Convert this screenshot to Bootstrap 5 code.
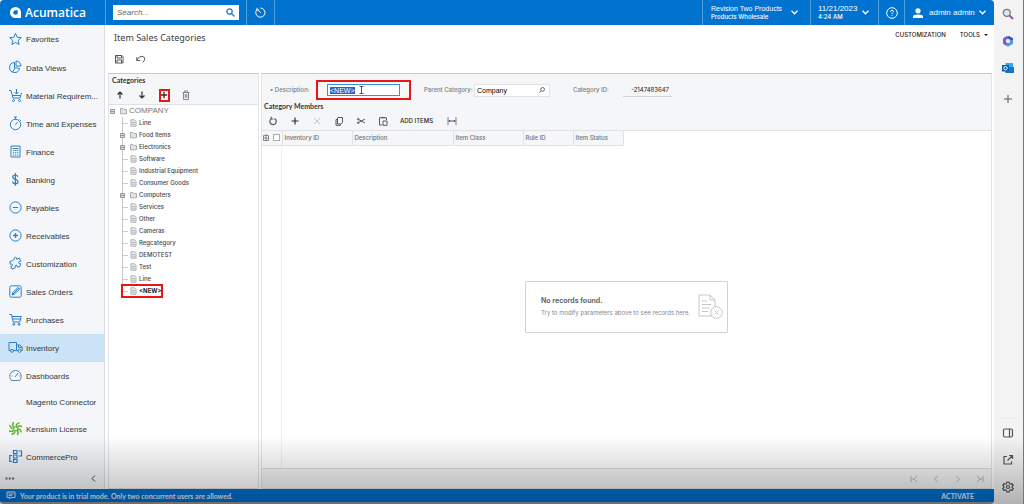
<!DOCTYPE html>
<html lang="en">
<head>
<meta charset="utf-8">
<meta name="viewport" content="width=device-width, initial-scale=1">
<title>Item Sales Categories</title>
<link href="https://cdn.jsdelivr.net/npm/bootstrap@5.3.0/dist/css/bootstrap.min.css" rel="stylesheet">
<script src="https://cdn.jsdelivr.net/npm/bootstrap@5.3.0/dist/js/bootstrap.bundle.min.js"></script>
<style>
:root{--blue:#0073d1;--pane:#f5f6f8;--line:#d3d5d8;--small:Inter,"Liberation Sans",sans-serif;--strong:Lato,"Liberation Sans",sans-serif}
body{font-family:"Liberation Sans",Arial,sans-serif;font-size:8px;line-height:12px;color:#3c4043;background:#f3f3f3}
svg{display:block;fill:none;flex:none}
svg:not([stroke]){stroke:currentColor}
button{border:0;background:none;padding:0;color:inherit;font:inherit;white-space:nowrap}
a{color:inherit;text-decoration:none}
.shell{height:100vh;border-right:1px solid #777}
.app{background:#fff;border-radius:4px;overflow:hidden}
.topbar{height:25px;background:var(--blue);color:#fff}
.topbar .cell{border-left:1px solid #4f9fdf;height:25px}
.brand{width:105px;padding-left:10px;font:600 12px/25px "Open Sans",sans-serif}
.search{width:126px;height:15px;margin-left:7px;background:#fff}
.search input{border:0;outline:0;padding:0 4px;font:italic 8px/15px "Liberation Sans",sans-serif;background:none;min-width:0}
.search input::placeholder{color:#666;opacity:1}
.two{line-height:8px;font-size:8px}
.two.firm{font-size:7px}
.two small{font:500 6px/8px var(--small);display:block}
.side{width:105px;background:#f4f6f9;border-right:1px solid #dcdee1;font-size:8px}
.side a{height:28px;padding:1px 0 0 8px;gap:3px;color:#33373b}
.side a:first-child{height:29px}
.side a.plain{height:25px}
.side a svg{width:15px;height:15px;color:#2a7fc9;margin-bottom:2px}
.side a.plain::before{content:"";width:15px}
.side a.on{background:#cbe3f7}
.side .more{height:18px;padding:0 8px 4px 5px}
.work{padding:0 2px 0 3px;min-width:0}
.title{font:400 9px/14px "Noto Sans",sans-serif;margin:0;padding:6px 0 0 6px}
.links{font:500 6px/12px var(--small);color:#222;padding:4px 4px 0 0;height:20px}
.links button{height:12px}
.links .dropdown-toggle::after{border-width:2px;border-top-color:#222;margin-left:4px}
.tool{width:22px;height:18px;display:flex;align-items:center;justify-content:center;color:#55595d}
.tool svg{width:10px;height:10px}
.tool.strong{color:#2b2f33}
.cats{width:151px}
.cats .box,.grid-pane{border:1px solid #e1e3e6;border-top-color:#c6c8cb}
.sm{font-family:var(--small);font-size:6px;line-height:12px}
.head{font:700 7px/12px var(--strong);margin:0;color:#33373b}
.bar{background:var(--pane)}
.tree{list-style:none;margin:0;padding:0;color:#44484c;font-weight:500}
.tree .node{height:12px;gap:2px}
.tree .root{font:8px/12px "Liberation Sans",sans-serif;color:#777}
.tree ul{list-style:none;margin:0 0 0 13px;padding:0}
.tree ul li{border-left:1px solid #c9c9c9}
.tree ul li:last-child{border-color:transparent}
.tree ul .node::before{content:"";width:5px;border-top:1px solid #ccc;flex:none}
.tree ul .fold::before{content:none}
.tree svg{width:7px;height:8px;color:#a9acb1}
.tree .pm{width:5px;height:5px;margin-left:-3px;margin-right:3px;color:#999}
.marked{outline:2px solid #e91616;outline-offset:-1px}
.newnode{width:40px}
.plus{width:11px;height:13px;display:flex;align-items:center;justify-content:center;outline-offset:-2px}
.plus svg{width:8px;height:8px}
.desc{width:95px;height:20px;padding:2px 9px;border:2px solid #e91616}
.desc input,.look input{border:1px solid #3d8fd6;height:12px;padding:0 2px;width:100%;font:7px/10px "Liberation Sans",sans-serif;outline:0;border-radius:0}
.desc input::selection{background:#2b62c8;color:#fff}
.caret{position:absolute;left:41px;top:4px}
.look{width:76px;background:#fff;border:1px solid #dfe1e4;height:13px}
.look input{border:0;min-width:0;height:11px;line-height:11px}
.idbox{width:49px;border-bottom:1px solid #d3d5d8;text-align:right;padding-right:3px;color:#222}
.lbl{color:#777b80;white-space:nowrap;font-weight:500}
.grid-table{table-layout:fixed;width:361px;margin:0}
.grid-table th{background:var(--pane);border-right:1px solid #dfe1e4;border-bottom:1px solid #dfe1e4;font-weight:500;color:#6c7075;height:14px;padding:0 2px;line-height:12px}
.grid-table input{width:7px;height:7px;margin:0;appearance:none;border:1px solid #a9acb0;background:#fff;display:block}
.selector{width:20px;border-right:1px solid #f0f1f2}
.empty{width:203px;height:52px;border:1px solid #d0d2d5;border-radius:1px;padding:0 4px 0 15px;color:#85898d;white-space:nowrap}
.empty strong{font:700 7px/12px var(--small);color:#666a6e}
.pager{height:20px;border-top:1px solid #dcdcdc;background:#f3f4f5}
.pager .tool{color:#b4b6b9}
.trial{height:15px;background:#0070d0;color:#e3effa;font:700 7px/12px var(--strong);padding:0 20px 0 6px}
.under{height:2px;background:#999}
.rail{width:29px;color:#555}
.rail button{height:27px;width:28px;display:flex;align-items:center;justify-content:center}
.rail svg{width:12px;height:12px}
.shade{position:absolute;left:0;right:0;bottom:0;height:68px;pointer-events:none;background:linear-gradient(transparent,rgba(0,0,0,.27))}
</style>
</head>
<body>
<div class="shell d-flex position-relative overflow-hidden">
<div class="app d-flex flex-column flex-grow-1">
  <header class="topbar d-flex align-items-center">
    <a href="#" class="brand d-flex align-items-center gap-1"><svg width="11" height="11" viewBox="0 0 11 11" stroke="none"><path fill="#fff" fill-rule="evenodd" d="M5.500 0A5.500 5.500 0 0 1 11 5.500V11H5.500A5.500 5.500 0 0 1 5.500 0ZM5.500 3.200A2.300 2.300 0 1 0 7.800 5.500V3.200Z"/></svg>Acumatica</a>
    <div class="cell d-flex align-items-center flex-grow-1">
      <div class="search d-flex align-items-center pe-1"><input class="flex-grow-1" type="text" placeholder="Search..." aria-label="Search"><svg width="9" height="9" viewBox="0 0 9 9" stroke="#2379c5" stroke-width="1.300"><circle cx="3.500" cy="3.500" r="2.700"/><path d="M5.400 5.400 8.500 8.500"/></svg></div>
      <button class="cell px-2 d-flex align-items-center" style="margin-left:7px" aria-label="Recent"><svg width="11" height="11" viewBox="0 0 11 11"><path d="M1.800 2.700A4.600 4.600 0 1 0 5.500 1M3.300 3.300 5.700 5.700M2 .8V3H4.200"/></svg></button>
      <div class="cell"></div>
    </div>
    <button class="cell d-flex align-items-center text-start" style="width:108px"><span class="two firm ps-2" style="width:88px">Revision Two Products<small>Products Wholesale</small></span><svg width="7" height="5" viewBox="0 0 7 5" stroke-width="1.300"><path d="M.5.8 3.500 3.800 6.500.8"/></svg></button>
    <button class="cell d-flex align-items-center text-start" style="width:68px"><span class="two" style="width:51px;padding-left:7px">11/21/2023<small>4:24 AM</small></span><svg width="7" height="5" viewBox="0 0 7 5" stroke-width="1.300"><path d="M.5.8 3.500 3.800 6.500.8"/></svg></button>
    <button class="cell d-flex align-items-center justify-content-center" style="width:26px" aria-label="Help"><svg width="12" height="12" viewBox="0 0 12 12"><circle cx="6" cy="6" r="5.300"/><path d="M4.500 4.800Q4.600 3.300 6 3.300 7.500 3.400 7.500 4.700 7.400 5.500 6.500 6 6 6.300 6 7.200M6 8.100V9.100"/></svg></button>
    <button class="cell d-flex align-items-center px-2" style="width:90px"><svg width="10" height="10" viewBox="0 0 10 10" stroke="none"><circle cx="5" cy="2.800" r="2.600" fill="#fff"/><path fill="#fff" d="M0 10V8.500Q0 6.500 5 6.500T10 8.500V10Z"/></svg><span class="flex-grow-1 text-start" style="padding-left:6px">admin admin</span><svg width="7" height="5" viewBox="0 0 7 5" stroke-width="1.300"><path d="M.5.8 3.500 3.800 6.500.8"/></svg></button>
  </header>

  <div class="d-flex flex-grow-1">
    <nav class="side d-flex flex-column">
      <a href="#" class="d-flex align-items-center"><svg viewBox="0 0 15 15"><path d="M7.500 1.500 9.200 5.300 13.300 5.700 10.200 8.400 11.100 12.500 7.500 10.400 3.900 12.500 4.800 8.400 1.700 5.700 5.800 5.300Z"/></svg>Favorites</a>
      <a href="#" class="d-flex align-items-center"><svg viewBox="0 0 15 15"><path d="M6.500 2.500A5 5 0 1 0 11.500 8.500L6.500 7.500ZM8 1A5 5 0 0 1 13 6H8ZM7 8 4.500 12"/></svg>Data Views</a>
      <a href="#" class="d-flex align-items-center"><svg viewBox="0 0 15 15"><path d="M1 2.500H3L5 10H12L13.500 5M4 7.500H12.500M8.500 1V6M6.500 4 8.500 6 10.500 4"/><circle cx="5.500" cy="12.500" r="1"/><circle cx="11.500" cy="12.500" r="1"/></svg>Material Requirem...</a>
      <a href="#" class="d-flex align-items-center"><svg viewBox="0 0 15 15"><circle cx="7.500" cy="8.500" r="5.200"/><path d="M6 1H9M7.500 1V3.300M11.500 3.500 12.800 4.800M7.500 8.500 9.500 6"/></svg>Time and Expenses</a>
      <a href="#" class="d-flex align-items-center"><svg viewBox="0 0 15 15"><path d="M3 2H12V13H3ZM4.500 4.500H10.500M5 6.500H6.300M7 6.500H8.300M9 6.500H10.300M5 8.700H6.300M7 8.700H8.300M9 8.700H10.300M5 11H6.300M7 11H8.300M9 11H10.300"/></svg>Finance</a>
      <a href="#" class="d-flex align-items-center"><svg viewBox="0 0 15 15"><path stroke-width="1.200" d="M9.800 4.800Q9.500 3 7.500 3 4.800 3 4.800 5 4.800 6.700 7.500 7.300 10 8 10 9.700 10 11.700 7.400 11.700 4.900 11.700 4.500 9.600M7.400 1V13.800"/></svg>Banking</a>
      <a href="#" class="d-flex align-items-center"><svg viewBox="0 0 15 15"><circle cx="7.500" cy="7.500" r="5.600"/><path d="M4.800 7.500H10.200"/></svg>Payables</a>
      <a href="#" class="d-flex align-items-center"><svg viewBox="0 0 15 15"><circle cx="7.500" cy="7.500" r="5.600"/><path stroke-width="1.300" d="M5 7.500H10M7.500 5V10"/></svg>Receivables</a>
      <a href="#" class="d-flex align-items-center"><svg viewBox="0 0 15 15"><path d="M4.500 4.500 6.300 3.400Q5.800 1.300 7.600 1.300 9 1.500 8.500 3.200L11.500 2.200 12.700 5.400Q10.700 5 10.600 6.600 10.800 8 12.500 7.500L12 10.500 9.200 11Q9.400 9.200 8 9.200 6.600 9.500 7.300 11.700L4 13.200 2.800 10.300Q4.800 10.300 4.600 8.700 4.100 7.400 2.300 8.300L1.800 5.600Z"/></svg>Customization</a>
      <a href="#" class="d-flex align-items-center"><svg viewBox="0 0 15 15"><rect x="1.800" y="1.800" width="11.400" height="11.400" rx="1.500"/><path d="M4 11 4.800 8.500 10 3.300 11.700 5 6.500 10.200ZM5 10 10.800 4.200"/></svg>Sales Orders</a>
      <a href="#" class="d-flex align-items-center"><svg viewBox="0 0 15 15"><path d="M1.500 2.500H3.500L5.200 10H11.800L13.300 4.500H4M4.500 7H12.500"/><circle cx="5.800" cy="12.300" r="1"/><circle cx="11" cy="12.300" r="1"/></svg>Purchases</a>
      <a href="#" class="on d-flex align-items-center"><svg viewBox="0 0 15 15"><path d="M2.500 10.500H1V2.500H8.500V10.500H5.500M8.500 5H12L14.200 7.500V10.500H13M10 10.500H8.500M10.500 5V7.500H14"/><circle cx="4" cy="10.800" r="1.500"/><circle cx="11.500" cy="10.800" r="1.500"/></svg>Inventory</a>
      <a href="#" class="d-flex align-items-center"><svg viewBox="0 0 15 15" stroke="#5585b3"><path d="M3.500 12.500A5.800 5.800 0 1 1 11.500 12.500ZM7 9 10 5M3.500 8H4.500M5 4.500 5.500 5M11 8H12"/></svg>Dashboards</a>
      <a href="#" class="plain d-flex align-items-center">Magento Connector</a>
      <a href="#" class="d-flex align-items-center"><svg viewBox="0 0 15 15" stroke="#62b22f" stroke-width="1.500"><path d="M7 6.500 4.500 4.500 5.500 1M8.200 6.500 8.500 3.500 11.500 1.500M9 7.200 11 4.800 14 5.500M9 8.200 12 8.500 13.500 11.500M8.200 9 10.300 11 9.500 14M7 9 6.500 12 3.500 13.500M6.200 8.200 4.300 10.500 1 10M6.200 7.200 3.200 7 1.500 4"/></svg>Kensium License</a>
      <a href="#" class="d-flex align-items-center"><svg viewBox="0 0 15 15" stroke-width="1.200"><path d="M5.500 1.500H9V4.500H5.500ZM5.500 6H9V9H5.500ZM5.500 10.500H9V13.500H5.500ZM10.500 2H13.500V7H10.500M4 6.500H1.800V12.500H4"/></svg>CommercePro</a>
      <div class="more d-flex align-items-center justify-content-between mt-auto"><button aria-label="More"><svg width="10" height="3" viewBox="0 0 10 3" stroke="none"><path fill="#666" d="M.5.5H2.500V2.500H.5ZM3.800.5H5.800V2.500H3.800ZM7.100.5H9.100V2.500H7.100Z"/></svg></button><button aria-label="Collapse"><svg width="5" height="7" viewBox="0 0 5 7"><path d="M4 .5 1 3.500 4 6.500"/></svg></button></div>
    </nav>

    <main class="work d-flex flex-column flex-grow-1">
      <div class="d-flex justify-content-between">
        <h1 class="title">Item Sales Categories</h1>
        <div class="links d-flex"><button style="margin-right:14px">CUSTOMIZATION</button><button class="dropdown-toggle d-flex align-items-center">TOOLS</button></div>
      </div>
      <div class="d-flex" style="height:28px;padding-top:5px">
        <button class="tool" aria-label="Save"><svg viewBox="0 0 10 10"><path d="M1.500 1.500H8L9 2.500V9H1.500ZM3 1.500V4H7.500V1.500M3 9V6H7.500V9"/></svg></button>
        <button class="tool" aria-label="Undo"><svg viewBox="0 0 10 10"><path d="M.8 6.300Q3 2 6 2.200 9.300 3 8.700 5.500 8.300 7 6.800 8.500M.8 3V6.500H4.300"/></svg></button>
      </div>
      <div class="d-flex flex-grow-1">
        <section class="cats d-flex flex-column">
          <div class="box flex-grow-1">
            <div class="bar border-bottom">
              <h2 class="head" style="padding-left:3px">Categories</h2>
              <div class="d-flex">
                <button class="tool strong" aria-label="Move up"><svg viewBox="0 0 10 10"><path stroke-width="1.200" d="M5 8.500V2M2.500 4.500 5 2 7.500 4.500"/></svg></button>
                <button class="tool strong" aria-label="Move down"><svg viewBox="0 0 10 10"><path stroke-width="1.200" d="M5 1.500V8M2.500 5.500 5 8 7.500 5.500"/></svg></button>
                <button class="tool strong" aria-label="Add category"><span class="marked plus"><svg viewBox="0 0 8 8"><path stroke-width="1.300" d="M4 .8V7.200M.8 4H7.200"/></svg></span></button>
                <button class="tool" aria-label="Delete category"><svg viewBox="0 0 10 10" stroke="#888"><path d="M1.500 2.500H8.500M3.500 2V1H6.500V2M2.500 2.500V9.500H7.500V2.500M4.200 4V8M5.800 4V8"/></svg></button>
              </div>
            </div>
            <ul class="tree sm" id="tree"></ul>
          </div>
        </section>
        <section class="flex-grow-1 d-flex flex-column grid-pane" style="margin-left:2px">
          <div class="bar border-bottom">
            <form class="d-flex align-items-center sm" style="padding:6px 0 0 8px">
              <label class="lbl" style="width:46px" for="desc">• Description:</label>
              <div class="desc position-relative"><input id="desc" type="text" value="&lt;NEW&gt;" class="d-block"><svg class="caret" width="5" height="8" viewBox="0 0 5 8" stroke="#555"><path d="M.5.5H4.500M2.500.5V7.500M.5 7.500H4.500"/></svg></div>
              <label class="lbl" style="width:50px;margin-left:13px" for="parent">Parent Category:</label>
              <div class="look d-flex align-items-center pe-1"><input id="parent" type="text" value="Company" class="flex-grow-1"><svg width="6" height="6" viewBox="0 0 6 6" stroke="#666"><circle cx="3.600" cy="2.400" r="1.900"/><path d="M2.300 3.700.3 5.700"/></svg></div>
              <span class="lbl" style="width:50px;margin-left:23px">Category ID:</span><output class="idbox">-2147483647</output>
            </form>
            <h2 class="head" style="padding-left:2px">Category Members</h2>
            <div class="d-flex align-items-center">
              <button class="tool" aria-label="Refresh"><svg viewBox="0 0 10 10"><path stroke-width="1.200" d="M3.300 2.800A3.200 3.200 0 1 0 6.500 2.600M3.200 .8V3H5.300"/></svg></button>
              <button class="tool strong" aria-label="Add row"><svg viewBox="0 0 10 10"><path stroke-width="1.200" d="M5 1.500V8.500M1.500 5H8.500"/></svg></button>
              <button class="tool" aria-label="Delete row"><svg viewBox="0 0 10 10" stroke="#c3c5c8"><path d="M2 2 8 8M8 2 2 8"/></svg></button>
              <button class="tool" aria-label="Copy"><svg viewBox="0 0 10 10"><path d="M4 1.500H8.500V6.500L7 8H3.500V2ZM3.500 3.500H2V9.300H6.500V8"/></svg></button>
              <button class="tool" aria-label="Cut"><svg viewBox="0 0 10 10"><path d="M3 3.700 9 7M3 6.300 9 3"/><circle cx="2.200" cy="3.200" r=".8"/><circle cx="2.200" cy="6.800" r=".8"/></svg></button>
              <button class="tool" aria-label="Paste"><svg viewBox="0 0 10 10"><path d="M4 9H1.500V1.800H8.500V4M3 1.500H7M5 5H9V9.300H5Z"/></svg></button>
              <button class="sm text-dark fw-medium" style="padding:0 8px 0 6px">ADD ITEMS</button>
              <button class="tool" aria-label="Fit columns"><svg viewBox="0 0 10 10"><path stroke="#8e6aa8" d="M1 1V9M9 1V9"/><path d="M1.500 5H8.500M3 4 2 5 3 6M7 4 8 5 7 6"/></svg></button>
            </div>
          </div>
          <table class="grid-table sm">
            <colgroup><col style="width:9px"><col style="width:11px"><col style="width:70px"><col style="width:101px"><col style="width:70px"><col style="width:50px"><col style="width:50px"></colgroup>
            <thead><tr><th class="border-end-0" style="padding:0 0 0 1px"><svg width="6" height="7" viewBox="0 0 6 7" stroke="#888"><path d="M.5 1.500H5.500V6.500H.5ZM1 4H5M3 0V6"/></svg></th><th><input type="checkbox" aria-label="Select all"></th><th>Inventory ID</th><th>Description</th><th>Item Class</th><th>Rule ID</th><th>Item Status</th></tr></thead>
          </table>
          <div class="flex-grow-1 d-flex">
            <div class="selector"></div>
            <div class="flex-grow-1 d-flex align-items-center justify-content-center" style="padding-right:20px">
              <div class="empty d-flex align-items-center justify-content-between">
                <div><strong>No records found.</strong><div class="sm">Try to modify parameters above to see records here.</div></div>
                <svg width="25" height="26" viewBox="0 0 25 26" stroke="#c4c6c9"><path d="M14 22H1V1H12L17 6V13M12 1V6H17M4 7H9M4 10.500H13M4 14H12M4 17.500H10"/><circle cx="18.500" cy="18.500" r="5.800" fill="#fff"/><path d="M16.500 16.500 20.500 20.500M20.500 16.500 16.500 20.500"/></svg>
              </div>
            </div>
          </div>
          <div class="pager d-flex justify-content-end align-items-center">
            <button class="tool" aria-label="First page"><svg viewBox="0 0 10 10"><path d="M2 2V8M8 2 5 5 8 8M2.500 5H5"/></svg></button>
            <button class="tool" aria-label="Previous page"><svg viewBox="0 0 10 10"><path d="M6.500 2 3.500 5 6.500 8"/></svg></button>
            <button class="tool" aria-label="Next page"><svg viewBox="0 0 10 10"><path d="M3.500 2 6.500 5 3.500 8"/></svg></button>
            <button class="tool" aria-label="Last page"><svg viewBox="0 0 10 10"><path d="M8 2V8M2 2 5 5 2 8M5 5H7.500"/></svg></button>
          </div>
        </section>
      </div>
    </main>
  </div>

  <footer class="trial d-flex align-items-center"><svg width="10" height="9" viewBox="0 0 10 9"><path d="M1 1H9V6.500H5L3.500 8V6.500H1ZM2.500 3H7.500M2.500 4.700H6"/></svg><span class="flex-grow-1 ps-1">Your product is in trial mode. Only two concurrent users are allowed.</span><button>ACTIVATE</button></footer>
  <div class="under"></div>
</div>
<aside class="rail d-flex flex-column">
  <button aria-label="Search web"><svg viewBox="0 0 12 12"><circle cx="4.800" cy="4.800" r="3.500" fill="#d7e8ee" stroke="#777" stroke-width="1.300"/><path stroke="#9252b8" stroke-width="2" d="M7.500 7.500 11 11"/></svg></button>
  <button aria-label="Microsoft 365"><svg viewBox="0 0 12 12" stroke-width="3"><path stroke="#7e5bd0" d="M6 2 2.500 4V8L5 9.500"/><path stroke="#3b55c4" d="M6 2 9.500 4V6"/><path stroke="#4b9be6" d="M9.500 5V8L6 10 4.500 9"/></svg></button>
  <button aria-label="Outlook"><svg viewBox="0 0 12 12" stroke="none"><path fill="#35a8ea" d="M3.500 1H11V6H3.500Z"/><path fill="#1477cc" d="M3.500 5H12V11H3.500Z"/><path fill="#0c5fae" d="M0 3H7V9.500H0Z"/><circle cx="3.500" cy="6.200" r="1.700" stroke="#fff"/></svg></button>
  <button class="mt-1" aria-label="Add"><svg viewBox="0 0 12 12"><path d="M6 2V10M2 6H10"/></svg></button>
  <div class="mt-auto mx-1 border-top border-secondary-subtle"></div>
  <button aria-label="Side panel"><svg viewBox="0 0 12 12" stroke-width="1.200"><rect x="1.500" y="2" width="9" height="8" rx="1.500"/><path d="M7.500 2V10"/></svg></button>
  <button aria-label="Open in new window"><svg viewBox="0 0 12 12" stroke-width="1.200"><path d="M5 2.500H2V10H9.500V7.500M7 1.500H10.500V5M10.500 1.500 5.500 6.500"/></svg></button>
  <button class="mb-1" aria-label="Settings"><svg viewBox="0 0 12 12" stroke-width="1.200"><path d="M5 1H7L7.500 2.500 8.700 3.200 10.200 2.800 11.200 4.500 10.100 5.600V6.500L11.200 7.600 10.200 9.300 8.700 8.900 7.500 9.600 7 11H5L4.500 9.600 3.300 8.900 1.800 9.300.8 7.600 1.900 6.500V5.600L.8 4.500 1.800 2.800 3.300 3.200 4.500 2.500Z"/><circle cx="6" cy="6" r="1.500"/></svg></button>
</aside>
<div class="shade"></div>
</div>
<script>
// Category tree: a leading "+" marks a category that has children.
const page='<svg viewBox="0 0 7 8"><path fill="#eceef0" d="M1 .8H4.500L6 2.300V7.200H1ZM2.300 3.500H4.700M2.300 5.200H4.700"/></svg>';
const folder='<svg viewBox="0 0 7 8"><path fill="#e1e3e6" d="M.5 1.500H3L4 2.500H6.500V6.800H.5Z"/></svg>';
const pm='<svg class="pm" viewBox="0 0 5 5"><path fill="#ddd" d="M.5.5H4.500V4.500H.5ZM1 2.500H4"/></svg>';
const names=['Line','+Food Items','+Electronics','Software','Industrial Equipment','Consumer Goods','+Computers','Services','Other','Cameras','Regcategory','DEMOTEST','Test','Line','<NEW>'];
const esc=s=>s.replace('<','&lt;').replace('>','&gt;');
document.getElementById('tree').innerHTML='<li><div class="node root d-flex align-items-center ps-1">'+pm+folder+'COMPANY</div><ul>'+
 names.map(n=>{const f=n[0]==='+',w=n==='<NEW>';
 return '<li'+(w?' class="marked newnode"':'')+'><div class="node d-flex align-items-center '+(f?'fold':'')+(w?' fw-bold text-dark':'')+'">'+(f?pm+folder:page)+'<span>'+esc(f?n.slice(1):n)+'</span></div></li>'}).join('')+'</ul></li>';
const d=document.getElementById('desc');d.focus({preventScroll:true});d.select();
</script>
</body>
</html>
